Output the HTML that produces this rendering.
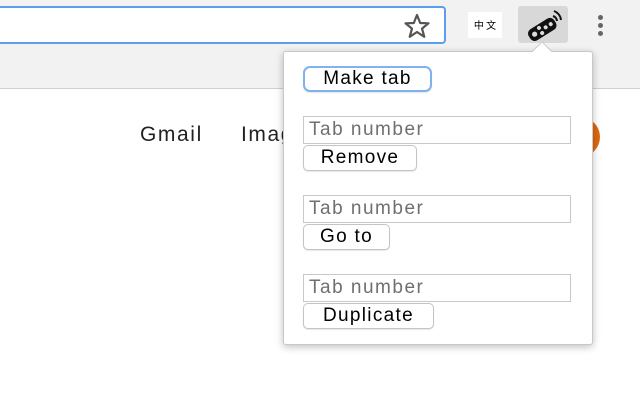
<!DOCTYPE html>
<html><head><style>
*{box-sizing:border-box;margin:0;padding:0}
body{width:640px;height:400px;overflow:hidden;background:#fff;font-family:"Liberation Sans",sans-serif;position:relative}
.tb{position:absolute;left:0;top:0;width:640px;height:89px;background:#f2f2f2;border-bottom:1px solid #cfcfcf}
.addr{position:absolute;left:-4px;top:6px;width:450px;height:38px;background:#fff;border:2px solid #5e9ded;border-radius:4px}
.pop{position:absolute;left:283px;top:51px;width:310px;height:294px;background:#fff;border:1px solid #c8c8c8;border-radius:3px;box-shadow:0 2px 8px rgba(0,0,0,.25)}
.arrow{position:absolute;left:535px;top:44px;width:14px;height:14px;background:#fff;border-left:1px solid #c8c8c8;border-top:1px solid #c8c8c8;transform:rotate(45deg)}
.btn{position:absolute;left:303px;height:26px;border:1px solid #c4c4c4;border-radius:5px;background:#fff;font-size:19px;letter-spacing:1.3px;color:#000;text-align:center;line-height:24px;box-shadow:0 1px 1px rgba(0,0,0,.1)}
.inp{position:absolute;left:303px;width:268px;height:28px;border:1px solid #c9c9c9;font-size:19px;letter-spacing:1.5px;color:#6f6f6f;padding-left:5px;line-height:26px}
</style></head><body>
<div class="tb"></div>
<div class="addr"></div>
<svg style="position:absolute;left:403px;top:13px" width="28" height="26" viewBox="0 0 28 26"><polygon points="14,2 17.2,10 25.5,10.3 19,15.6 21.3,23.8 14,19 6.7,23.8 9,15.6 2.5,10.3 10.8,10" fill="none" stroke="#555" stroke-width="2.2" stroke-linejoin="round"/></svg>
<div style="position:absolute;left:468px;top:12px;width:34px;height:26px;background:#fff;font-size:10px;line-height:26px;text-align:center;font-family:'Noto Sans CJK SC',sans-serif;color:#000">中 文</div>
<div style="position:absolute;left:518px;top:6px;width:50px;height:37px;background:#d8d8d8;border-radius:3px"></div>
<svg style="position:absolute;left:524px;top:7px" width="40" height="36" viewBox="0 0 40 36"><g transform="rotate(-32 18 22)"><rect x="3" y="16" width="30" height="13" rx="5" fill="#111"/><circle cx="9" cy="22.5" r="2.6" fill="#ddd"/><circle cx="16" cy="19.5" r="2" fill="#ddd"/><circle cx="16" cy="25.5" r="2" fill="#ddd"/><circle cx="22" cy="22.5" r="2" fill="#ddd"/><circle cx="28" cy="22.5" r="2" fill="#ddd"/></g><path d="M29 9a6 6 0 0 1 4 5M30 4a11 11 0 0 1 7 9" stroke="#111" stroke-width="2" fill="none"/></svg>
<div style="position:absolute;left:598px;top:15px;width:5px;height:5px;border-radius:50%;background:#666"></div>
<div style="position:absolute;left:598px;top:23px;width:5px;height:5px;border-radius:50%;background:#666"></div>
<div style="position:absolute;left:598px;top:31px;width:5px;height:5px;border-radius:50%;background:#666"></div>
<div style="position:absolute;left:140px;top:123px;font-size:21px;letter-spacing:1.6px;color:#222">Gmail</div>
<div style="position:absolute;left:241px;top:123px;font-size:21px;letter-spacing:1.6px;color:#222">Images</div>
<div style="position:absolute;left:560px;top:117px;width:40px;height:40px;border-radius:50%;background:#e0660f"></div>
<div class="pop"></div>
<div class="arrow"></div>
<div class="btn" style="top:66px;width:129px;border:2px solid #7fb2ee;border-radius:7px;line-height:22px">Make tab</div>
<div class="inp" style="top:116px">Tab number</div>
<div class="btn" style="top:145px;width:114px">Remove</div>
<div class="inp" style="top:195px">Tab number</div>
<div class="btn" style="top:224px;width:87px">Go to</div>
<div class="inp" style="top:274px">Tab number</div>
<div class="btn" style="top:303px;width:131px">Duplicate</div>
</body></html>
